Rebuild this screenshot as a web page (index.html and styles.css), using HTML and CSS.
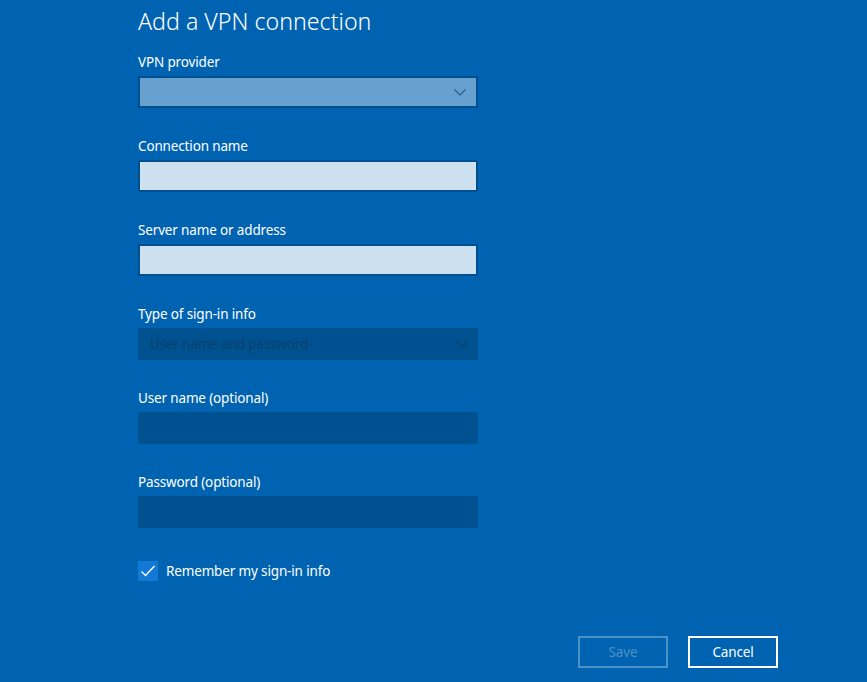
FILE: index.html
```html
<!DOCTYPE html>
<html lang="en">
<head>
<meta charset="utf-8">
<title>Add a VPN connection</title>
<link rel="stylesheet" href="styles.css">
</head>
<body>
<div class="page">
  <h1 class="title">Add a VPN connection</h1>

  <div class="field">
    <div class="label">VPN provider</div>
    <div class="box select">
      <span class="value"></span>
      <svg class="chev" width="12" height="7" viewBox="0 0 12 7"><polyline points="0.5,0.5 6,6 11.5,0.5" fill="none" stroke="currentColor" stroke-width="1.1"/></svg>
    </div>
  </div>

  <div class="field">
    <div class="label">Connection name</div>
    <div class="box input"></div>
  </div>

  <div class="field">
    <div class="label">Server name or address</div>
    <div class="box input"></div>
  </div>

  <div class="field">
    <div class="label">Type of sign-in info</div>
    <div class="box select disabled">
      <span class="value">User name and password</span>
      <svg class="chev" width="12" height="7" viewBox="0 0 12 7"><polyline points="0.5,0.5 6,6 11.5,0.5" fill="none" stroke="currentColor" stroke-width="1.1"/></svg>
    </div>
  </div>

  <div class="field">
    <div class="label">User name (optional)</div>
    <div class="box disabled"></div>
  </div>

  <div class="field">
    <div class="label">Password (optional)</div>
    <div class="box disabled"></div>
  </div>

  <div class="check">
    <span class="checkbox">
      <svg width="20" height="20" viewBox="0 0 20 20"><polyline points="3.5,10.5 7.5,14.5 16.5,5" fill="none" stroke="#ffffff" stroke-width="1.4"/></svg>
    </span>
    <span class="check-label">Remember my sign-in info</span>
  </div>

  <div class="footer">
    <button class="btn btn-disabled">Save</button>
    <button class="btn">Cancel</button>
  </div>
</div>
</body>
</html>
```

FILE: styles.css
```css
html, body {
  margin: 0;
  padding: 0;
  height: 100%;
}
body {
  background: #0063b1;
  color: #ffffff;
  font-family: "Noto Sans", "Open Sans", "DejaVu Sans", sans-serif;
  font-size: 13.5px;
  letter-spacing: -0.15px;
  overflow: hidden;
}
.page {
  width: 867px;
  height: 682px;
  box-sizing: border-box;
  padding-left: 138px;
  display: flex;
  flex-direction: column;
}
.title {
  margin: 5px 0 15px 0;
  font-size: 23.2px;
  font-weight: 300;
  line-height: 32px;
  letter-spacing: 0;
}
.field {
  display: flex;
  flex-direction: column;
  margin-bottom: 28px;
}
.label {
  height: 20px;
  line-height: 20px;
  margin-bottom: 4px;
}
.box {
  width: 340px;
  height: 32px;
  box-sizing: border-box;
  display: flex;
  align-items: center;
  justify-content: space-between;
  padding: 0 10px 0 10px;
}
.select {
  background: #66a1d0;
  border: 2px solid #004f8e;
  color: #2b5a82;
}
.input {
  background: #cce0ef;
  border: 2px solid #004f8e;
}
.disabled {
  background: #00518f;
  border: none;
  padding: 0 10px 0 12px;
  color: #0a3f6c;
}
.value {
  color: #0a3f6c;
}
.chev {
  display: block;
}
.check {
  display: flex;
  align-items: center;
  margin-top: 5px;
  height: 20px;
}
.checkbox {
  width: 20px;
  height: 20px;
  background: #1279d6;
  display: block;
}
.checkbox svg {
  display: block;
}
.check-label {
  margin-left: 8px;
  line-height: 20px;
}
.footer {
  display: flex;
  justify-content: flex-end;
  gap: 20px;
  padding-right: 89px;
  margin-top: 55px;
}
.btn {
  width: 90px;
  height: 32px;
  box-sizing: border-box;
  background: transparent;
  border: 2px solid #ffffff;
  color: #ffffff;
  font-family: inherit;
  font-size: 13.5px;
  letter-spacing: -0.15px;
  padding: 0;
  margin: 0;
}
.btn-disabled {
  border-color: #4d92c6;
  color: #4d92c6;
}
```
